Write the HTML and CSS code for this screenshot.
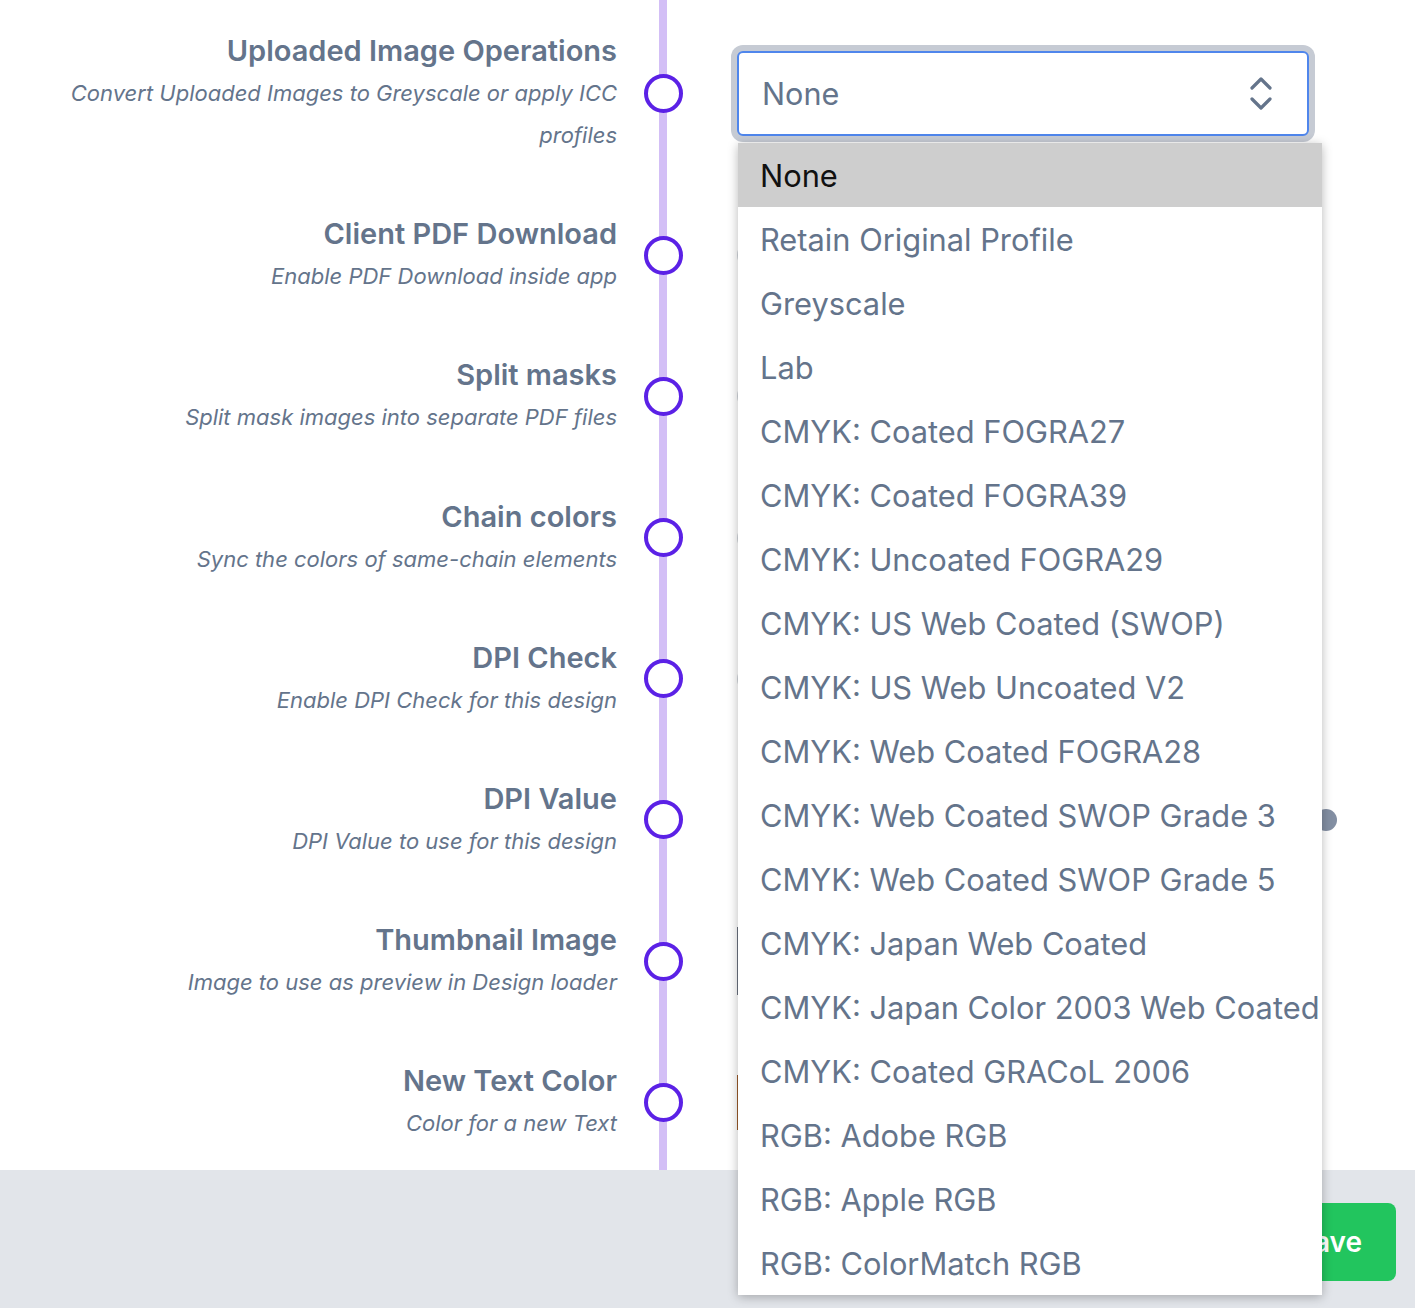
FILE: index.html
```html
<!DOCTYPE html>
<html lang="en">
<head>
<meta charset="utf-8">
<title>Design settings</title>
<link rel="stylesheet" href="styles.css">
</head>
<body>
<main class="settings">
  <section class="row row-tall">
    <div class="label">
      <h3 class="title">Uploaded Image Operations</h3>
      <p class="desc">Convert Uploaded Images to Greyscale or apply ICC profiles</p>
    </div>
    <div class="node"><span class="dot"></span></div>
    <div class="control">
      <div class="select-wrap">
        <div class="select">
          <span class="select-value">None</span>
          <svg class="chevrons" width="26" height="40" viewBox="0 0 26 40" aria-hidden="true">
            <path d="M4 15 L13 6 L22 15" fill="none" stroke="#64748b" stroke-width="3.2" stroke-linecap="round" stroke-linejoin="round"/>
            <path d="M4 26 L13 35 L22 26" fill="none" stroke="#64748b" stroke-width="3.2" stroke-linecap="round" stroke-linejoin="round"/>
          </svg>
        </div>
        <ul class="options">
          <li class="option selected">None</li>
          <li class="option">Retain Original Profile</li>
          <li class="option">Greyscale</li>
          <li class="option">Lab</li>
          <li class="option">CMYK: Coated FOGRA27</li>
          <li class="option">CMYK: Coated FOGRA39</li>
          <li class="option">CMYK: Uncoated FOGRA29</li>
          <li class="option">CMYK: US Web Coated (SWOP)</li>
          <li class="option">CMYK: US Web Uncoated V2</li>
          <li class="option">CMYK: Web Coated FOGRA28</li>
          <li class="option">CMYK: Web Coated SWOP Grade 3</li>
          <li class="option">CMYK: Web Coated SWOP Grade 5</li>
          <li class="option">CMYK: Japan Web Coated</li>
          <li class="option">CMYK: Japan Color 2003 Web Coated</li>
          <li class="option">CMYK: Coated GRACoL 2006</li>
          <li class="option">RGB: Adobe RGB</li>
          <li class="option">RGB: Apple RGB</li>
          <li class="option">RGB: ColorMatch RGB</li>
        </ul>
      </div>
    </div>
  </section>

  <section class="row">
    <div class="label">
      <h3 class="title">Client PDF Download</h3>
      <p class="desc">Enable PDF Download inside app</p>
    </div>
    <div class="node"><span class="dot"></span></div>
    <div class="control"><span class="toggle"></span></div>
  </section>

  <section class="row">
    <div class="label">
      <h3 class="title">Split masks</h3>
      <p class="desc">Split mask images into separate PDF files</p>
    </div>
    <div class="node"><span class="dot"></span></div>
    <div class="control"><span class="toggle"></span></div>
  </section>

  <section class="row">
    <div class="label">
      <h3 class="title">Chain colors</h3>
      <p class="desc">Sync the colors of same-chain elements</p>
    </div>
    <div class="node"><span class="dot"></span></div>
    <div class="control"><span class="toggle"></span></div>
  </section>

  <section class="row">
    <div class="label">
      <h3 class="title">DPI Check</h3>
      <p class="desc">Enable DPI Check for this design</p>
    </div>
    <div class="node"><span class="dot"></span></div>
    <div class="control"><span class="toggle"></span></div>
  </section>

  <section class="row">
    <div class="label">
      <h3 class="title">DPI Value</h3>
      <p class="desc">DPI Value to use for this design</p>
    </div>
    <div class="node"><span class="dot"></span></div>
    <div class="control">
      <div class="slider"><span class="slider-thumb"></span></div>
    </div>
  </section>

  <section class="row">
    <div class="label">
      <h3 class="title">Thumbnail Image</h3>
      <p class="desc">Image to use as preview in Design loader</p>
    </div>
    <div class="node"><span class="dot"></span></div>
    <div class="control"><div class="thumb-box"></div></div>
  </section>

  <section class="row">
    <div class="label">
      <h3 class="title">New Text Color</h3>
      <p class="desc">Color for a new Text</p>
    </div>
    <div class="node"><span class="dot"></span></div>
    <div class="control"><div class="swatch"></div></div>
  </section>
</main>
<footer class="footer">
  <button class="save" type="button">Save</button>
</footer>
</body>
</html>
```

FILE: styles.css
```css
* { box-sizing: border-box; }

html, body {
  margin: 0;
  padding: 0;
  background: #ffffff;
  font-family: Inter, "Noto Sans", "DejaVu Sans", sans-serif;
  color: #64748b;
}

.settings {
  display: flex;
  flex-direction: column;
  gap: 57.2px;
  padding: 30px 0 26px;
  background: linear-gradient(#d3bff6, #d3bff6) no-repeat 659px 0 / 8px 100%;
}

.row {
  display: grid;
  grid-template-columns: 617px 92px 620px;
  align-items: center;
  min-height: 84px;
}

.label {
  text-align: right;
  padding-left: 50px;
}

.title {
  margin: 0;
  font-size: 29px;
  line-height: 42px;
  font-weight: 600;
  color: #64748b;
}

.desc {
  margin: 0;
  font-size: 22px;
  line-height: 42px;
  font-style: italic;
  color: #64748b;
}

.node {
  display: flex;
  justify-content: center;
  padding-left: 1px;
}

.dot {
  width: 39px;
  height: 39px;
  border-radius: 50%;
  border: 4px solid #5b21e6;
  background: #ffffff;
}

.control {
  padding-left: 28px;
  display: flex;
  align-items: center;
}

/* select */
.select-wrap {
  position: relative;
  width: 572px;
  flex-shrink: 0;
}

.select {
  height: 85px;
  display: flex;
  align-items: center;
  justify-content: space-between;
  padding: 0 33px 0 23px;
  border: 2px solid #4f86ec;
  border-radius: 6px;
  box-shadow: 0 0 0 6px #c6cbd4;
  background: #ffffff;
  font-size: 30.6px;
  color: #64748b;
}

.options {
  position: absolute;
  z-index: 10;
  top: 92px;
  left: 1px;
  width: 584px;
  margin: 0;
  padding: 0;
  list-style: none;
  background: #ffffff;
  box-shadow: 0 2px 10px rgba(0, 0, 0, 0.28);
  overflow: hidden;
}

.option {
  height: 64px;
  line-height: 66px;
  padding-left: 22px;
  font-size: 30.8px;
  color: #64748b;
  white-space: nowrap;
  overflow: hidden;
}

.option.selected {
  background: #cecece;
  color: #111111;
}

/* hidden controls behind the open list */
.toggle {
  display: block;
  width: 60px;
  height: 30px;
  border-radius: 15px;
  background: #d1d5db;
}

.slider {
  width: 600px;
  flex-shrink: 0;
  height: 22px;
  display: flex;
  justify-content: flex-end;
}

.slider-thumb {
  width: 22px;
  height: 22px;
  border-radius: 50%;
  background: #838fa3;
}

.thumb-box {
  width: 120px;
  height: 68px;
  border: 1px solid #6b7280;
}

.swatch {
  width: 120px;
  height: 55px;
  background: #9a5a2a;
}

/* footer */
.footer {
  height: 138px;
  background: #e2e5ea;
  display: flex;
  justify-content: flex-end;
  align-items: center;
  padding: 6px 19px 0 0;
}

.save {
  height: 78px;
  padding: 0 34px;
  border: 0;
  border-radius: 8px;
  background: #22c55e;
  color: #ffffff;
  font-family: Inter, "Noto Sans", sans-serif;
  font-size: 28px;
  font-weight: 600;
}
```
